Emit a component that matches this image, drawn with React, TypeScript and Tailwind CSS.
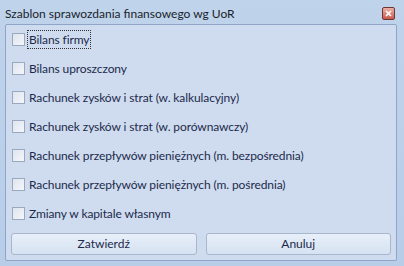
import { useState } from "react";

const OPTIONS = [
  "Bilans firmy",
  "Bilans uproszczony",
  "Rachunek zysków i strat (w. kalkulacyjny)",
  "Rachunek zysków i strat (w. porównawczy)",
  "Rachunek przepływów pieniężnych (m. bezpośrednia)",
  "Rachunek przepływów pieniężnych (m. pośrednia)",
  "Zmiany w kapitale własnym",
];

function CloseButton() {
  return (
    <button className="flex h-[13px] w-[13px] items-center justify-center rounded-[2px] border border-[#6e3535] bg-gradient-to-b from-[#eab0a8] to-[#c8584c]">
      <svg width="7" height="7" viewBox="0 0 7 7">
        <path d="M1 1 L6 6 M6 1 L1 6" stroke="#ffffff" strokeWidth="1.6" />
      </svg>
    </button>
  );
}

export default function App() {
  const [checked, setChecked] = useState<boolean[]>(OPTIONS.map(() => false));

  return (
    <div
      className="flex h-[266px] w-[404px] flex-col bg-gradient-to-b from-[#bfd3eb] to-[#b8cde8] pl-[5px] pr-[7px] pb-[5px] text-[12px]"
      style={{ fontFamily: 'Lato, "Open Sans", sans-serif' }}
    >
      {/* Title bar */}
      <div className="flex h-[24px] items-center justify-between pr-[2px] pt-[3px]">
        <span className="text-[12px] leading-none text-[#1a1f2b]">
          Szablon sprawozdania finansowego wg UoR
        </span>
        <CloseButton />
      </div>

      {/* Content panel */}
      <div className="flex flex-1 flex-col rounded-[2px] border border-[#8ea5c7] bg-[#cfdcef] px-[5px] pb-[5px]">
        <div className="flex flex-col pl-[1px]">
          {OPTIONS.map((label, i) => (
            <label key={label} className="flex h-[29px] cursor-default items-center gap-[3px]">
              <span
                onClick={() => setChecked((c) => c.map((v, j) => (j === i ? !v : v)))}
                className="flex h-[13px] w-[13px] items-center justify-center border border-[#9aa9bf] bg-gradient-to-br from-[#dfe5ee] to-[#f4f6fa]"
              >
                {checked[i] && <span className="h-[7px] w-[7px] bg-[#2c4a7a]" />}
              </span>
              <span
                className={`px-[1px] py-[1px] text-[12px] leading-[15px] tracking-[-0.1px] text-[#1c2a4c] ${
                  i === 0 ? "outline outline-1 outline-dotted outline-[#333]" : ""
                }`}
              >
                {label}
              </span>
            </label>
          ))}
        </div>
        <div className="mt-[5px] grid grid-cols-2 gap-[9px]">
          <button className="h-[22px] rounded-[3px] border border-[#a9b7cc] bg-gradient-to-b from-[#e7eff9] to-[#d6e2f2] text-[12px] text-[#1c2a4c]">
            Zatwierdź
          </button>
          <button className="h-[22px] rounded-[3px] border border-[#a9b7cc] bg-gradient-to-b from-[#e7eff9] to-[#d6e2f2] text-[12px] text-[#1c2a4c]">
            Anuluj
          </button>
        </div>
      </div>
    </div>
  );
}
